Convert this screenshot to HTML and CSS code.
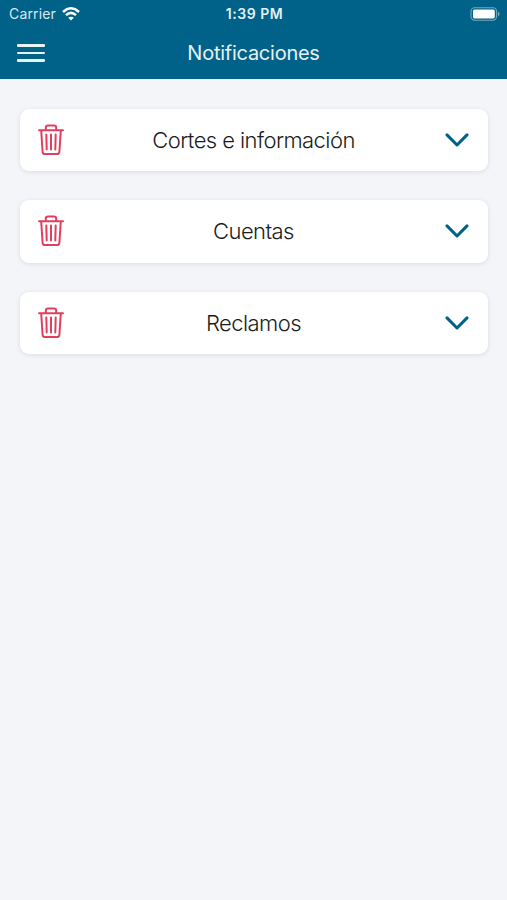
FILE: index.html
```html
<!DOCTYPE html>
<html lang="es">
<head>
    <meta charset="UTF-8">
    <meta name="viewport" content="width=device-width, initial-scale=1.0">
    <title>Notificaciones</title>
    <link rel="stylesheet" href="styles.css">
</head>
<body>
    <!-- Shared icons -->
    <svg class="icon-defs" width="0" height="0">
        <symbol id="icon-trash" viewBox="0 0 26 32">
            <path d="M1 6.2H25M3.2 6.4L4.6 27.8Q4.8 30 7 30H19Q21.2 30 21.4 27.8L22.8 6.4M7.8 6V3.6Q7.8 1.4 10 1.4H16Q18.2 1.4 18.2 3.6V6M8.3 10.4L8.7 25.4M13 10.4V25.4M17.7 10.4L17.3 25.4"/>
        </symbol>
        <symbol id="icon-chevron" viewBox="0 0 24 14">
            <path d="M2 1.9L12 12L22 1.9"/>
        </symbol>
    </svg>

    <header class="header">
        <div class="status-bar">
            <div class="carrier">
                <span>Carrier</span>
                <svg class="wifi" viewBox="0 0 18 14">
                    <path class="wave" d="M1 5Q9 -2.4 17 5M4 8.2Q9 3.6 14 8.2"/>
                    <path class="dot" d="M6.2 10.8Q9 8.5 11.8 10.8L9 13.6Z"/>
                </svg>
            </div>
            <div class="time">1:39 PM</div>
            <div class="battery">
                <svg viewBox="0 0 30 14">
                    <rect class="shell" x="1" y="0.8" width="25.6" height="12.4" rx="3.6"/>
                    <rect class="charge" x="3" y="2.6" width="21.8" height="8.8" rx="1.6"/>
                    <path class="tip" d="M28 4.8Q29.6 5.4 29.6 7T28 9.2Z"/>
                </svg>
            </div>
        </div>
        <div class="nav-bar">
            <div class="menu">
                <span></span>
                <span></span>
                <span></span>
            </div>
            <h1 class="title">Notificaciones</h1>
        </div>
    </header>

    <main class="list">
        <div class="card">
            <svg class="trash"><use href="#icon-trash"/></svg>
            <span class="label">Cortes e información</span>
            <svg class="chevron"><use href="#icon-chevron"/></svg>
        </div>
        <div class="card">
            <svg class="trash"><use href="#icon-trash"/></svg>
            <span class="label">Cuentas</span>
            <svg class="chevron"><use href="#icon-chevron"/></svg>
        </div>
        <div class="card">
            <svg class="trash"><use href="#icon-trash"/></svg>
            <span class="label">Reclamos</span>
            <svg class="chevron"><use href="#icon-chevron"/></svg>
        </div>
    </main>
</body>
</html>
```
FILE: styles.css
```css
* {
    box-sizing: border-box;
}

body {
    margin: 0;
    min-height: 100vh;
    background: #f3f5f9;
    color: #1c1c1c;
    font-family: Inter, 'Liberation Sans', sans-serif;
}

.icon-defs {
    display: block;
}

.header {
    height: 79px;
    background: #006288;
    color: white;
}

.status-bar {
    display: grid;
    grid-template-columns: 1fr auto 1fr;
    align-items: center;
    height: 27px;
    padding: 0 7px 0 9px;
}

.carrier {
    display: flex;
    align-items: center;
    gap: 6px;
    font-size: 14px;
    letter-spacing: 0.15px;
    color: #d9e9f0;
}

.wifi {
    width: 18px;
    height: 14px;
}

.wifi .wave {
    fill: none;
    stroke: white;
    stroke-width: 2.5;
}

.wifi .dot {
    fill: white;
}

.time {
    font-size: 14px;
    font-weight: 600;
    letter-spacing: 0.55px;
    color: #e4f0f5;
}

.battery {
    display: flex;
    justify-content: flex-end;
}

.battery svg {
    width: 30px;
    height: 14px;
}

.shell {
    fill: none;
    stroke: #73a9bf;
    stroke-width: 1.1;
}

.charge {
    fill: white;
}

.tip {
    fill: #73a9bf;
}

.nav-bar {
    display: grid;
    grid-template-columns: 60px 1fr 60px;
    align-items: center;
    height: 52px;
}

.menu {
    display: flex;
    flex-direction: column;
    gap: 5px;
    padding-left: 17px;
}

.menu span {
    width: 28px;
    height: 2.4px;
    border-radius: 1px;
    background: #e6f4f8;
}

.title {
    margin: 0;
    font-size: 20px;
    font-weight: 400;
    line-height: 52px;
    letter-spacing: -0.25px;
    text-align: center;
    color: #e6f1f6;
}

.list {
    display: flex;
    flex-direction: column;
    gap: 29px;
    padding: 29.5px 19px 0 20px;
}

.card {
    display: grid;
    grid-template-columns: 26px 1fr 24px;
    align-items: center;
    height: 62.5px;
    padding: 0 19px 0 18px;
    border-radius: 9px;
    background: white;
    box-shadow: 0 1px 5px rgba(0, 0, 0, 0.1);
}

.label {
    padding-right: 2px;
    font-size: 22px;
    font-weight: 300;
    letter-spacing: -0.57px;
    text-align: center;
}

.trash {
    width: 26px;
    height: 32px;
    fill: none;
    stroke: #e0405e;
    stroke-width: 2;
    stroke-linecap: round;
    stroke-linejoin: round;
}

.chevron {
    width: 24px;
    height: 14px;
    fill: none;
    stroke: #006288;
    stroke-width: 3;
    stroke-linecap: round;
    stroke-linejoin: round;
}
```
